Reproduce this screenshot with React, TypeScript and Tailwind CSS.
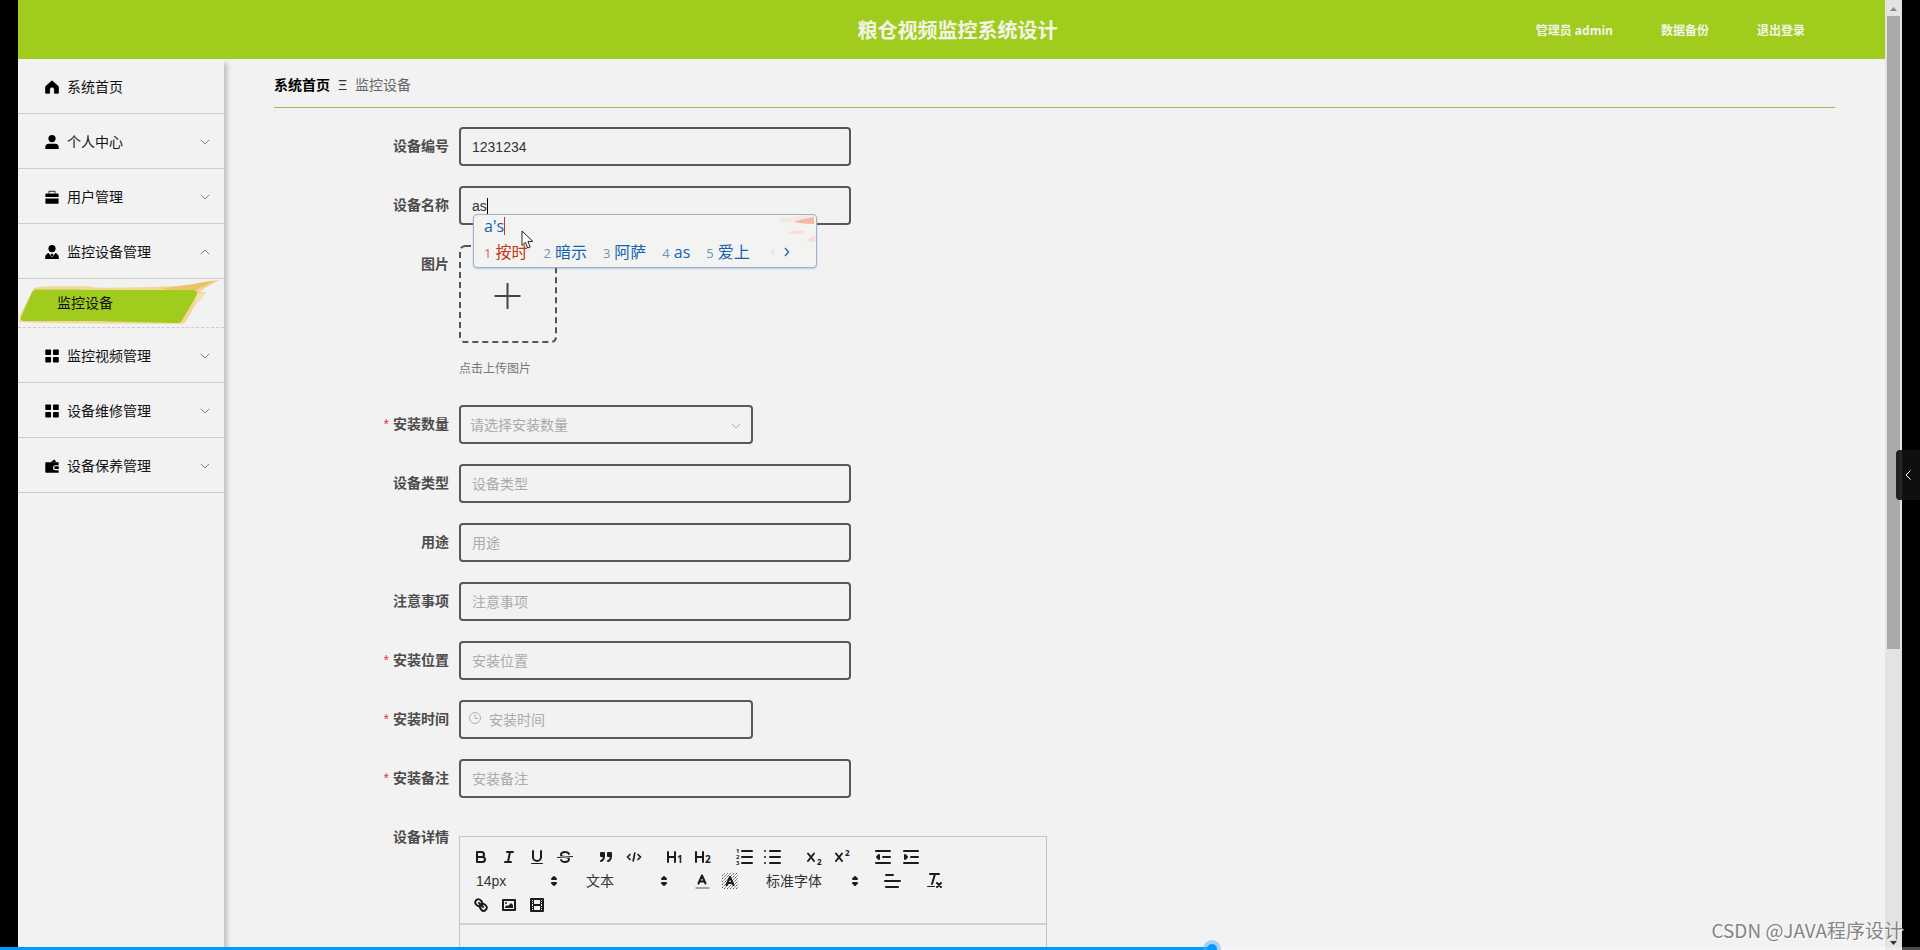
import { useState } from "react";
import type { ReactNode } from "react";

const INK = "#1c1c1c";

type MenuItem = { label: string; icon: ReactNode; arrow?: "up" | "down"; children?: string[] };

const HomeIcon = (
  <path d="M7 0.8 0.6 6.6v6.6h4V9.4a2.4 2.4 0 0 1 4.8 0v3.8h4V6.6Z" stroke="#000" strokeWidth="0.8" strokeLinejoin="round" />
);
const UserIcon = (
  <>
    <circle cx="7" cy="3.6" r="3.6" />
    <path d="M0.3 14v-1.6c0-2.3 1.2-3.6 3.4-3.6h6.6c2.2 0 3.4 1.3 3.4 3.6V14Z" />
  </>
);
const CaseIcon = (
  <>
    <path d="M4 3.4V1.3h6v2.1" fill="none" stroke="#555" strokeWidth="1.2" />
    <path d="M0.4 7V4.4c0-.7.4-1 1-1h11.2c.6 0 1 .3 1 1V7ZM0.4 8.6h13.2V13c0 .5-.3.8-.8.8H1.2c-.5 0-.8-.3-.8-.8Z" />
  </>
);
const CustomIcon = (
  <>
    <circle cx="7" cy="3.6" r="3.6" />
    <path d="M3.6 8 7 12.4 10.4 8c2.1.6 3.4 2.4 3.4 4.4V14H.2v-1.6C.2 10.4 1.5 8.6 3.6 8Z" />
    <path d="m7 8.4 1.5 1.3L7 12 5.5 9.7Z" />
  </>
);
const GridIcon = (
  <>
    <rect x="0.3" y="0.4" width="5.8" height="5.6" rx="0.8" />
    <rect x="8" y="0.4" width="5.8" height="5.6" rx="0.8" />
    <rect x="0.3" y="8" width="5.8" height="5.6" rx="0.8" />
    <rect x="8" y="8" width="5.8" height="5.6" rx="0.8" />
  </>
);
const WalletIcon = (
  <>
    <path d="m5.5 3.2 4-2.8 1.8 2.8Z" />
    <path d="M0.3 4.2c0-.6.3-.9.9-.9h12.4v2.9H10.5a2.5 2.5 0 0 0 0 5h3.1v2.5H1.2c-.6 0-.9-.3-.9-.9Z" />
    <path d="M10.6 7.3h3.2v2.8h-3.2a1.4 1.4 0 0 1 0-2.8Z" />
  </>
);

const MENU: MenuItem[] = [
  { label: "系统首页", icon: HomeIcon },
  { label: "个人中心", icon: UserIcon, arrow: "down" },
  { label: "用户管理", icon: CaseIcon, arrow: "down" },
  { label: "监控设备管理", icon: CustomIcon, arrow: "up", children: ["监控设备"] },
  { label: "监控视频管理", icon: GridIcon, arrow: "down" },
  { label: "设备维修管理", icon: GridIcon, arrow: "down" },
  { label: "设备保养管理", icon: WalletIcon, arrow: "down" },
];

const CANDIDATES = ["按时", "暗示", "阿萨", "as", "爱上"];

function Chevron({ up = false, className = "" }: { up?: boolean; className?: string }) {
  return (
    <svg viewBox="0 0 10 6" className={`w-2.5 h-1.5 ${className}`} fill="none" stroke="currentColor">
      <path d={up ? "M0.8 5.2 5 1l4.2 4.2" : "M0.8 0.8 5 5 9.2 0.8"} />
    </svg>
  );
}

function Brush() {
  return (
    <svg viewBox="0 0 206 49" className="absolute left-0 top-0 w-[206px] h-[49px]">
      <path
        d="M16 9C30 6 50 8 74 7c-10 2 20 2 52 1 24 0 38-1 50-3 8-2 18-4 26-4-8 4-15 7-20 12 2 0 5 0 6 1-4 3-5 8-9 10-4 4-7 13-11 18 0 2-3 3-8 3L30 44 1 43l1-7Z"
        fill="#f3d798"
      />
      <path d="M140 9c20 0 40-6 58-7-10 4-18 9-25 10-6 1-20-1-33-3Z" fill="#ecc468" />
      <path d="M178 17c3-2 5-4 9-2-4 3-5 7-10 9Z" fill="#f5e2b4" />
      <path
        d="M19 10.5c-3 0-4 1-5.500 4L3.200 37.500c-1 3 0 4.500 3 4.500l70 0 83 2c3 0 4-1 5-3l14-24c2-4 1-6-4-6H100Z"
        fill="#a0cc1e"
      />
    </svg>
  );
}

function Sidebar() {
  return (
    <aside className="relative z-10 w-[206px] shrink-0 bg-[#f2f2f2] shadow-[3px_4px_5px_rgba(0,0,0,0.22)]">
      <ul>
        {MENU.map((item) => (
          <li key={item.label}>
            <a href="#" className="flex items-center h-[55px] pt-0.5 pl-[27px] pr-3.5 border-b border-[#ccc] text-sm text-[#111]">
              <svg viewBox="0 0 14 14" className="w-3.5 h-3.5 mr-2 shrink-0 fill-black">
                {item.icon}
              </svg>
              <span className="flex-1">{item.label}</span>
              {item.arrow && <Chevron up={item.arrow === "up"} className="text-[#808080]" />}
            </a>
            {item.children?.map((child) => (
              <a key={child} href="#" className="relative block h-[49px] border-b border-dashed border-[#ccc] text-sm text-[#111]">
                <Brush />
                <span className="relative block pl-[39px] leading-[49px]">{child}</span>
              </a>
            ))}
          </li>
        ))}
      </ul>
    </aside>
  );
}

function Row({ id, label, required, children }: { id: string; label: string; required?: boolean; children: ReactNode }) {
  return (
    <div className="flex mb-5">
      <label
        htmlFor={id}
        className="w-[185px] shrink-0 pr-2.5 text-right text-sm leading-[39px] font-bold text-[#4c4c4c]"
      >
        {required && <span className="mr-1 font-normal text-[#e03c3c]">*</span>}
        {label}
      </label>
      {children}
    </div>
  );
}

const FIELD =
  "h-[39px] border-2 border-[#585858] rounded bg-transparent text-sm text-[#333] outline-none placeholder:text-[#aaa] placeholder:opacity-100";

function TextField({ id, label, required }: { id: string; label: string; required?: boolean }) {
  return (
    <Row id={id} label={label} required={required}>
      <input id={id} placeholder={label} className={`${FIELD} w-[392px] px-[11px]`} />
    </Row>
  );
}

function ImePopup() {
  return (
    <div className="absolute left-3.5 top-7 z-20 w-[344px] h-[54px] overflow-hidden rounded-sm border border-[#9db4c8] bg-[#f3f3f2] px-2.5 font-['Open_Sans','Noto_Sans_CJK_SC',sans-serif] shadow-[0_1px_2px_rgba(60,130,190,0.35)]">
      <svg viewBox="0 0 40 30" className="absolute right-0 top-0 w-10 h-[30px]">
        <path d="M4 4c8-2 12-2 20-3l14-1v4c-10 3-22 3-34 4Z" fill="#f8e6e1" />
        <path d="M18 7c6-3 12-3 20-5v7c-8 0-14-1-20-2Z" fill="#f3b9a6" />
        <path d="M12 18c6-3 11-3 17-2-4 4-10 4-17 2Z" fill="#f8ddd5" />
        <path d="M30 26c2-2 5-3 9-5v6Z" fill="#f8dcd4" />
      </svg>
      <div className="flex items-center h-[22px] text-base leading-5 text-[#1464b0]">
        a&#39;s<span className="w-px h-[18px] bg-[#c23a1e]" />
      </div>
      <div className="flex items-center h-[30px] text-base text-[#1464b0]">
        {CANDIDATES.map((word, i) => (
          <span key={word} className={i === 0 ? "mr-4 text-[#c8330f]" : "mr-4"}>
            <span className={i === 0 ? "mr-1 text-[13px] text-[#e0607a]" : "mr-1 text-[13px] text-[#6f93bd]"}>{i + 1}</span>
            <span className={word === "as" ? "font-medium" : ""}>{word}</span>
          </span>
        ))}
        <svg viewBox="0 0 20 10" className="w-5 h-2.5 ml-1" fill="none">
          <path d="M4 2 1.5 5 4 8" stroke="#d5d9e2" />
          <path d="m15 1 3.5 4L15 9" stroke="#2d6aa5" strokeWidth="1.4" />
        </svg>
      </div>
    </div>
  );
}

function Pointer() {
  return (
    <svg viewBox="0 0 13 20" className="absolute left-[62px] top-[44px] z-30 w-[13px] h-5">
      <path d="M1 1v14.5l3.4-3.2 2.3 5.7 2.5-1-2.3-5.6h4.9Z" fill="#fff" stroke="#222" />
    </svg>
  );
}

function Tool({ title, children }: { title: string; children: ReactNode }) {
  return (
    <button type="button" title={title} aria-label={title} className="w-7 h-6 px-[5px] py-[3px]">
      <svg viewBox="0 0 18 18" className="w-[18px] h-[18px] overflow-visible" fill="none" stroke={INK} strokeWidth="2" strokeLinecap="round" strokeLinejoin="round">
        {children}
      </svg>
    </button>
  );
}

function Digit({ x, y, size = 8, children }: { x: number; y: number; size?: number; children: string }) {
  return (
    <text x={x} y={y} fontSize={size} fontWeight="700" fill={INK} stroke="none" fontFamily="Noto Sans, sans-serif">
      {children}
    </text>
  );
}

function Picker({ label, wide, options }: { label: string; wide?: boolean; options: string[] }) {
  return (
    <div className={wide ? "relative w-[107px]" : "relative w-24"}>
      <select aria-label={label} className="w-full h-6 pl-[9px] appearance-none bg-transparent text-sm leading-6 text-[#333] outline-none">
        {options.map((o) => (
          <option key={o}>{o}</option>
        ))}
      </select>
      <svg viewBox="0 0 18 18" className="pointer-events-none absolute right-0 top-[3px] w-[18px] h-[18px]" fill={INK} stroke={INK} strokeWidth="2" strokeLinejoin="round">
        <polygon points="7 11 9 13 11 11" />
        <polygon points="7 7 9 5 11 7" />
      </svg>
    </div>
  );
}

function Editor() {
  return (
    <div className="mt-[18px] w-[588px] border border-[#c4c4c4]">
      <div className="border-b-2 border-[#d0d0d0] px-[7px] pt-2 pb-1.5">
        <div className="flex gap-[13px]">
          <div className="flex">
            <Tool title="粗体">
              <path d="M5,4H9.5A2.5,2.5,0,0,1,9.5,9H5Z" />
              <path d="M5,9h5.5A2.5,2.5,0,0,1,10.5,14H5Z" />
            </Tool>
            <Tool title="斜体">
              <path d="M7 4h6M5 14h6M8 14 10 4" />
            </Tool>
            <Tool title="下划线">
              <path d="M5,3V9a4,4,0,0,0,8,0V3" />
              <rect x="3" y="15" width="12" height="1" rx="0.5" fill={INK} stroke="none" />
            </Tool>
            <Tool title="删除线">
              <path d="M16.5 8.5 1.5 9.5" strokeWidth="1" />
              <path
                stroke="none"
                fill={INK}
                d="M9.007,8C6.542,7.791,6,7.519,6,6.5,6,5.792,7.283,5,9,5c1.571,0,2.765.679,2.969,1.309a1,1,0,0,0,1.9-.617C13.356,4.106,11.354,3,9,3,6.2,3,4,4.538,4,6.5a3.2,3.2,0,0,0,.5,1.843Z"
              />
              <path
                stroke="none"
                fill={INK}
                d="M8.984,10C11.457,10.208,12,10.479,12,11.5c0,0.708-1.283,1.5-3,1.5-1.571,0-2.765-.679-2.969-1.309a1,1,0,1,0-1.9.617C4.644,13.894,6.646,15,9,15c2.8,0,5-1.538,5-3.5a3.2,3.2,0,0,0-.5-1.843Z"
              />
            </Tool>
          </div>
          <div className="flex">
            <Tool title="引用">
              <rect x="4" y="5" width="3" height="3" fill={INK} />
              <rect x="11" y="5" width="3" height="3" fill={INK} />
              <path d="M7,8c0,4.031-3,5-3,5M14,8c0,4.031-3,5-3,5" />
            </Tool>
            <Tool title="代码">
              <path d="M5 6.5 2.5 9 5 11.5M13 6.5 15.500 9 13 11.5M9.800 5 8.200 13" strokeWidth="1.7" />
            </Tool>
          </div>
          <div className="flex">
            <Tool title="标题 1">
              <path d="M2 4v10M9 4v10M2 9h7" />
              <Digit x={11} y={15} size={10}>1</Digit>
            </Tool>
            <Tool title="标题 2">
              <path d="M2 4v10M9 4v10M2 9h7" />
              <Digit x={11} y={15} size={10}>2</Digit>
            </Tool>
          </div>
          <div className="flex">
            <Tool title="有序列表">
              <path d="M7 3h10M7 9h10M7 15h10" />
              <Digit x={1} y={5} size={6}>1</Digit>
              <Digit x={1} y={11} size={6}>2</Digit>
              <Digit x={1} y={17} size={6}>3</Digit>
            </Tool>
            <Tool title="无序列表">
              <path d="M7 3h10M7 9h10M7 15h10" />
              <path d="M2 3h0M2 9h0M2 15h0" />
            </Tool>
          </div>
          <div className="flex">
            <Tool title="下标">
              <path d="M4 5.5 10 13M10 5.5 4 13" />
              <Digit x={13} y={17}>2</Digit>
            </Tool>
            <Tool title="上标">
              <path d="M4 5.5 10 13M10 5.5 4 13" />
              <Digit x={13} y={8}>2</Digit>
            </Tool>
          </div>
          <div className="flex">
            <Tool title="减少缩进">
              <path d="M3 15h14M3 3h14M10 9h7" />
              <polygon points="6 7 6 11 4 9" fill={INK} />
            </Tool>
            <Tool title="增加缩进">
              <path d="M3 15h14M3 3h14M10 9h7" />
              <polygon points="4 7 4 11 6 9" fill={INK} />
            </Tool>
          </div>
        </div>
        <div className="flex gap-3.5">
          <Picker label="字号" options={["14px", "16px", "18px"]} />
          <Picker label="段落" options={["文本", "标题1", "标题2"]} />
          <div className="flex">
            <Tool title="文字颜色">
              <path d="M6.5 11.5 10 3.500 13.500 11.5M7.500 9.500h5" />
              <path d="M4 16h13" stroke="#888" strokeWidth="1.4" />
            </Tool>
            <Tool title="背景颜色">
              <path
                d="M2 4 5 1M2 7 8 1M2 10 11 1M2 13 14 1M2 16 17 1M4 17 18 3M7 17 18 6M10 17 18 9M13 17 18 12M16 17 18 15"
                stroke="#555"
                strokeWidth="1"
                strokeDasharray="1.5 0.7"
                strokeLinecap="butt"
              />
              <path d="M6.5 13 10 5 13.5 13M7.5 11h5" />
            </Tool>
          </div>
          <Picker label="字体" wide options={["标准字体", "宋体", "黑体"]} />
          <Tool title="对齐">
            <path d="M2 9h15M3 15h12M3 3h7" />
          </Tool>
          <Tool title="清除格式">
            <path d="M5 2h9M7 12 10 2" />
            <path d="M12 11l4 4M16 11l-4 4" />
            <rect x="2" y="14" width="8" height="1" rx="0.5" fill={INK} stroke="none" />
          </Tool>
        </div>
        <div className="flex">
          <Tool title="链接">
            <path d="M7 7 11 11" />
            <path d="M8.9,4.577a3.476,3.476,0,0,1,.36,4.679A3.476,3.476,0,0,1,4.577,8.9C3.185,7.5,2.035,6.4,4.217,4.217S7.5,3.185,8.9,4.577Z" />
            <path d="M13.423,9.1a3.476,3.476,0,0,0-4.679-.36,3.476,3.476,0,0,0,.36,4.679c1.392,1.392,2.5,2.542,4.679.36S14.815,10.5,13.423,9.1Z" />
          </Tool>
          <Tool title="图片">
            <rect x="3" y="4" width="12" height="10" />
            <circle cx="6" cy="7" r="1" fill={INK} stroke="none" />
            <polygon points="5 12 5 11 7 9 8 10 11 7 13 9 13 12" fill={INK} stroke="none" />
          </Tool>
          <Tool title="视频">
            <rect x="3" y="3" width="12" height="12" />
            <path d="M5.5 3v12M12.5 3v12" strokeWidth="1" />
            <path d="M6 9h6" />
            <path d="M3 5.5h2M3 7.5h2M3 10.5h2M3 12.5h2M13 5.5h2M13 7.5h2M13 10.5h2M13 12.5h2" strokeWidth="1" />
          </Tool>
        </div>
      </div>
      <textarea id="detail" className="block w-full h-[300px] p-4 resize-none bg-transparent text-sm outline-none" />
    </div>
  );
}

function DeviceForm() {
  const [code, setCode] = useState("1231234");
  const [name, setName] = useState("as");

  return (
    <form className="mt-[19px]">
      <Row id="code" label="设备编号">
        <input id="code" value={code} onChange={(e) => setCode(e.target.value)} className={`${FIELD} w-[392px] px-[11px]`} />
      </Row>
      <Row id="name" label="设备名称">
        <div className="relative">
          <input id="name" value={name} onChange={(e) => setName(e.target.value)} className={`${FIELD} w-[392px] px-[11px]`} />
          <span className="absolute left-7 top-3 w-px h-4 bg-black" />
          <ImePopup />
          <Pointer />
        </div>
      </Row>
      <Row id="photo" label="图片">
        <div className="h-[140px]">
          <div className="relative size-[98px]">
            <svg viewBox="0 0 98 98" className="size-full" fill="none" stroke="#555" strokeWidth="2">
              <rect x="1" y="1" width="96" height="96" rx="5" strokeDasharray="6 4" />
              <path d="M48.5 38v26M35.5 51h26" stroke="#444" />
            </svg>
            <input id="photo" type="file" className="absolute inset-0 opacity-0" />
          </div>
          <p className="mt-4 text-xs leading-5 text-[#777]">点击上传图片</p>
        </div>
      </Row>
      <Row id="count" label="安装数量" required>
        <div className="relative">
          <select id="count" className={`${FIELD} w-[294px] appearance-none pl-[9px] text-[#aaa]!`}>
            <option>请选择安装数量</option>
          </select>
          <Chevron className="pointer-events-none absolute right-3 top-[18px] text-[#aaa]" />
        </div>
      </Row>
      <TextField id="type" label="设备类型" />
      <TextField id="usage" label="用途" />
      <TextField id="notice" label="注意事项" />
      <TextField id="place" label="安装位置" required />
      <Row id="time" label="安装时间" required>
        <div className="relative">
          <input id="time" placeholder="安装时间" className={`${FIELD} w-[294px] pl-7`} />
          <svg viewBox="0 0 12 12" className="absolute left-2.5 top-3 size-3" fill="none" stroke="#b0b0b0">
            <circle cx="6" cy="6" r="5.5" />
            <path d="M6 2.5v4h3" />
          </svg>
        </div>
      </Row>
      <TextField id="remark" label="安装备注" required />
      <Row id="detail" label="设备详情">
        <Editor />
      </Row>
    </form>
  );
}

export default function App() {
  const [progress, setProgress] = useState(632);

  return (
    <div className="relative h-screen flex overflow-hidden bg-black px-[18px] font-['Liberation_Sans','Noto_Sans_CJK_SC',sans-serif]">
      <div className="flex-1 flex flex-col min-w-0 bg-[#f2f2f2]">
        <header className="flex items-center h-[59px] shrink-0 pt-0.5 pl-[92px] pr-20 bg-[#a0cc1e] text-[#f2f5e6] font-['Open_Sans','Noto_Sans_CJK_SC',sans-serif] font-bold">
          <div className="flex-1" />
          <h1 className="text-xl">粮仓视频监控系统设计</h1>
          <nav className="flex-1 flex justify-end gap-12 text-xs">
            <a href="#">管理员 admin</a>
            <a href="#">数据备份</a>
            <a href="#">退出登录</a>
          </nav>
        </header>
        <div className="flex-1 flex min-h-0">
          <Sidebar />
          <main className="flex-1 min-w-0 overflow-hidden px-[50px]">
            <div className="flex items-center gap-2 h-[49px] pt-1 border-b border-[#a5b450] text-sm">
              <a href="#" className="font-bold text-black">系统首页</a>
              <span className="text-[#333]">Ξ</span>
              <span className="text-[#666]">监控设备</span>
            </div>
            <DeviceForm />
          </main>
        </div>
      </div>

      <div className="flex flex-col items-center w-[17px] shrink-0 bg-[#e3e3e3]">
        <svg viewBox="0 0 17 16" className="w-[17px] h-4 shrink-0">
          <path d="m5 11 3.5-4 3.5 4Z" fill="#8a8a8a" />
        </svg>
        <div className="w-[13px] h-2/3 bg-[#a9a9a9]" />
        <svg viewBox="0 0 17 16" className="w-[17px] h-4 shrink-0 mt-auto">
          <path d="m5 7 3.5 4L12 7Z" fill="#333" />
        </svg>
      </div>

      <button
        type="button"
        aria-label="展开"
        className="absolute right-0 top-[450px] w-6 h-[50px] flex items-center justify-center rounded-l-sm bg-[#111]/90"
      >
        <svg viewBox="0 0 6 10" className="w-1.5 h-2.5" fill="none" stroke="#fff">
          <path d="M5.5.5 1 5l4.5 4.5" />
        </svg>
      </button>

      <div className="absolute right-[17px] bottom-1.5 text-[19px] leading-7 text-[#858585] font-['Noto_Sans_CJK_SC',sans-serif] [text-shadow:1px_1px_0_#fff]">
        CSDN @JAVA程序设计
      </div>

      <input
        type="range"
        aria-label="播放进度"
        min={0}
        max={1000}
        value={progress}
        onChange={(e) => setProgress(Number(e.target.value))}
        className="absolute left-0 bottom-0 z-40 w-full h-[3px] appearance-none bg-[linear-gradient(to_right,#0099ff_63.2%,rgba(255,255,255,0.3)_63.2%)] [&::-webkit-slider-thumb]:appearance-none [&::-webkit-slider-thumb]:size-2.5 [&::-webkit-slider-thumb]:rounded-full [&::-webkit-slider-thumb]:bg-[#0099ff] [&::-webkit-slider-thumb]:shadow-[0_0_0_4px_rgba(80,180,255,0.5)]"
      />
    </div>
  );
}
